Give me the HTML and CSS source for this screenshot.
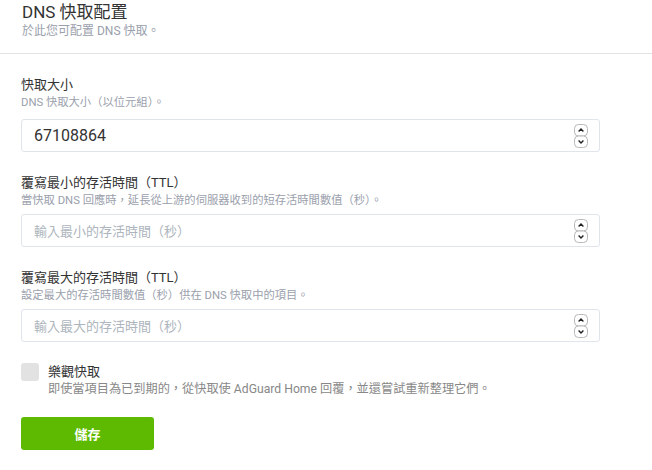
FILE: index.html
```html
<!DOCTYPE html>
<html lang="zh-Hant">
<head>
<meta charset="utf-8">
<link rel="stylesheet" href="styles.css">
</head>
<body>
<div class="card">
  <div class="card-header">
    <div class="card-title">DNS 快取配置</div>
    <div class="card-subtitle">於此您可配置 DNS 快取。</div>
  </div>
  <form class="card-body">
    <div class="group group-first">
      <div class="label">快取大小</div>
      <div class="desc desc-first">DNS 快取大小（以位元組）。</div>
      <div class="field">
        <input class="input" type="text" value="67108864">
        <svg class="spin" width="14" height="24" viewBox="0 0 14 24" aria-hidden="true">
          <rect x="0.5" y="0.5" width="13" height="11.5" rx="4" fill="#fff" stroke="#b8b8b8"/>
          <rect x="0.5" y="12" width="13" height="11.5" rx="4" fill="#fff" stroke="#b8b8b8"/>
          <path d="M4.6 7.4 L7 5 L9.4 7.4" fill="none" stroke="#222" stroke-width="1.4"/>
          <path d="M4.6 16.6 L7 19 L9.4 16.6" fill="none" stroke="#222" stroke-width="1.4"/>
        </svg>
      </div>
    </div>
    <div class="group">
      <div class="label">覆寫最小的存活時間（TTL）</div>
      <div class="desc">當快取 DNS 回應時，延長從上游的伺服器收到的短存活時間數值（秒）。</div>
      <div class="field">
        <input class="input" type="text" placeholder="輸入最小的存活時間（秒）">
        <svg class="spin" width="14" height="24" viewBox="0 0 14 24" aria-hidden="true">
          <rect x="0.5" y="0.5" width="13" height="11.5" rx="4" fill="#fff" stroke="#b8b8b8"/>
          <rect x="0.5" y="12" width="13" height="11.5" rx="4" fill="#fff" stroke="#b8b8b8"/>
          <path d="M4.6 7.4 L7 5 L9.4 7.4" fill="none" stroke="#222" stroke-width="1.4"/>
          <path d="M4.6 16.6 L7 19 L9.4 16.6" fill="none" stroke="#222" stroke-width="1.4"/>
        </svg>
      </div>
    </div>
    <div class="group">
      <div class="label">覆寫最大的存活時間（TTL）</div>
      <div class="desc">設定最大的存活時間數值（秒）供在 DNS 快取中的項目。</div>
      <div class="field">
        <input class="input" type="text" placeholder="輸入最大的存活時間（秒）">
        <svg class="spin" width="14" height="24" viewBox="0 0 14 24" aria-hidden="true">
          <rect x="0.5" y="0.5" width="13" height="11.5" rx="4" fill="#fff" stroke="#b8b8b8"/>
          <rect x="0.5" y="12" width="13" height="11.5" rx="4" fill="#fff" stroke="#b8b8b8"/>
          <path d="M4.6 7.4 L7 5 L9.4 7.4" fill="none" stroke="#222" stroke-width="1.4"/>
          <path d="M4.6 16.6 L7 19 L9.4 16.6" fill="none" stroke="#222" stroke-width="1.4"/>
        </svg>
      </div>
    </div>
    <div class="check">
      <span class="box"></span>
      <div class="check-text">
        <div class="check-label">樂觀快取</div>
        <div class="check-desc">即使當項目為已到期的，從快取使 AdGuard Home 回覆，並還嘗試重新整理它們。</div>
      </div>
    </div>
    <button class="btn" type="button">儲存</button>
  </form>
</div>
</body>
</html>
```
FILE: styles.css
```css
* { box-sizing: border-box; }
html, body { margin: 0; padding: 0; background: #fff; }
body {
  font-family: Roboto, "Noto Sans CJK TC", sans-serif;
  color: #333;
}
.card-header {
  padding: 1px 21px 14px 22px;
  border-bottom: 1px solid #e3e3e3;
}
.card-title {
  font-size: 17px;
  line-height: 22px;
  color: #333;
}
.card-subtitle {
  font-size: 12px;
  line-height: 16px;
  color: #9aa0ac;
}
.card-body {
  display: flex;
  flex-direction: column;
  align-items: flex-start;
  padding: 21px 21px 0 21px;
  margin: 0;
}
.group {
  width: 579px;
  margin-bottom: 21px;
}
.label {
  font-size: 13px;
  line-height: 20px;
  color: #333;
}
.desc {
  font-size: 11.3px;
  line-height: 16px;
  color: #9aa0ac;
  margin-bottom: 5px;
}
.desc-first { margin-bottom: 8px; }
.field {
  position: relative;
}
.input {
  display: block;
  width: 100%;
  height: 33px;
  border: 1px solid #e0e5ec;
  border-radius: 3px;
  padding: 0 40px 0 12px;
  font-family: Roboto, "Noto Sans CJK TC", sans-serif;
  font-size: 16px;
  color: #333;
  outline: none;
  background: #fff;
}
.input::placeholder {
  color: #adb5bd;
  font-size: 13px;
}
.spin {
  position: absolute;
  right: 12px;
  top: 5px;
}
.check {
  display: flex;
  gap: 9px;
  margin-top: -1px;
}
.box {
  width: 18px;
  height: 18px;
  border-radius: 3px;
  background: #e2e2e2;
  margin-top: 1px;
  flex: none;
}
.check-label {
  font-size: 13px;
  line-height: 19px;
  color: #333;
}
.check-desc {
  font-size: 12.2px;
  line-height: 16px;
  color: #888;
}
.btn {
  margin-top: 20px;
  width: 133px;
  height: 33px;
  border: none;
  border-radius: 3px;
  background: #5eba00;
  color: #fff;
  font-family: Roboto, "Noto Sans CJK TC", sans-serif;
  font-size: 13px;
  font-weight: 700;
  padding: 0;
}
```
